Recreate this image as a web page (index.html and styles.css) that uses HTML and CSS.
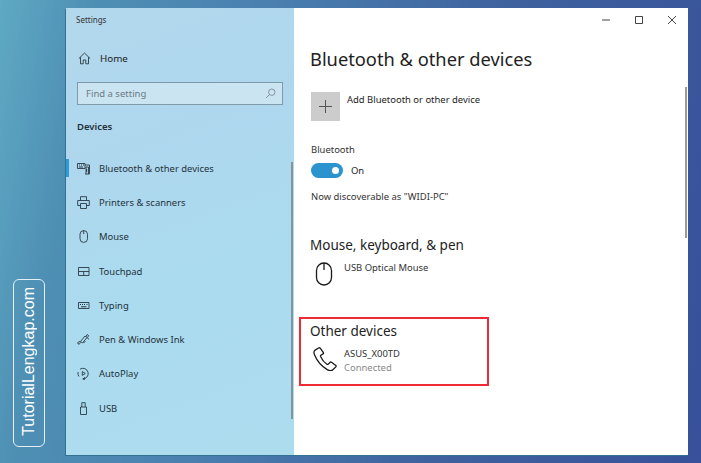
FILE: index.html
```html
<!DOCTYPE html>
<html lang="en">
<head>
<meta charset="utf-8">
<title>Settings</title>
<link rel="stylesheet" href="styles.css">
</head>
<body>
<aside class="watermark"><span>TutorialLengkap.com</span></aside>
<main class="window">
  <nav class="sidebar">
    <div class="app-title">Settings</div>
    <div class="home">
      <svg class="icon" viewBox="0 0 13 13"><path d="M.8 6.6 6.5 1l5.7 5.6M2.5 5.2v6.6h2.7V8h2.6v3.8h2.7V5.2"/></svg>
      <span>Home</span>
    </div>
    <div class="search">
      <span>Find a setting</span>
      <svg class="search-icon" viewBox="0 0 11 11"><circle cx="6.8" cy="4.2" r="3.2"/><path d="M4.5 6.5 1 10"/></svg>
    </div>
    <div class="group">Devices</div>
    <ul class="menu">
      <li class="item active">
        <svg class="icon" viewBox="0 0 13 13"><path d="M.5 1.500h7.500v5H.5zM8 3h4.500v9H8M9 12V5h2.500v7"/><path class="dots" d="M2 3h1M4 3h1M6 3h1M2 5h4M9.700 7v3"/></svg>
        <span>Bluetooth &amp; other devices</span>
      </li>
      <li class="item">
        <svg class="icon" viewBox="0 0 13 13"><path d="M3.500 4.500V.7h6v3.800M3.500 9.500H.7v-5h11.600v5H9.500M3.500 7.500h6v5h-6z"/></svg>
        <span>Printers &amp; scanners</span>
      </li>
      <li class="item">
        <svg class="icon" viewBox="0 0 13 13"><rect x="3" y=".6" width="7.500" height="11.800" rx="3.700"/><path d="M6.700.6v3.500"/></svg>
        <span>Mouse</span>
      </li>
      <li class="item">
        <svg class="icon" viewBox="0 0 13 13"><path d="M1.500 2.500h10.500v8H1.500zM1.500 6.500h10.500M6.700 6.500v4"/></svg>
        <span>Touchpad</span>
      </li>
      <li class="item">
        <svg class="icon" viewBox="0 0 13 13"><path d="M1.500 3.500h10.500v6H1.500z"/><path class="dots" d="M3 5.500h1M5 5.500h1M7 5.500h1M9.500 5.500h1M4 7.800h5.500"/></svg>
        <span>Typing</span>
      </li>
      <li class="item">
        <svg class="icon" viewBox="0 0 13 13"><path d="M1 11c-.8-1.600 1-3 2-2.300.9.800-.2 3-2 2.300zM3.500 8.500 8 3l2 1.500-4.500 5.500zM6 9c1 .5 2 .2 2.500-.5M9 3.500l1.200-2 1.500 1.200-1.500 2M10.500 5.500l1.500.5"/></svg>
        <span>Pen &amp; Windows Ink</span>
      </li>
      <li class="item">
        <svg class="icon" viewBox="0 0 13 13"><path d="M3 2.200A5.300 5.300 0 1 1 5.500 11.900M8 10.200l-2 1.700 2 1M1.100 5a5.300 5.300 0 0 0 .8 4.500"/><path d="M5.300 4.600v3.800l3-1.900z"/></svg>
        <span>AutoPlay</span>
      </li>
      <li class="item">
        <svg class="icon" viewBox="0 0 13 13"><path d="M3.500 5h6v7.500h-6zM4.800 5V.7h3.400V5"/><path class="dots" d="M5.800 2.500h.01M7.200 2.500h.01"/></svg>
        <span>USB</span>
      </li>
    </ul>
    <div class="side-scroll"></div>
  </nav>
  <section class="content">
    <div class="titlebar">
      <svg class="ctrl" viewBox="0 0 10 10"><path d="M1 5h8"/></svg>
      <svg class="ctrl" viewBox="0 0 10 10"><path d="M1.500 1.500h7v7h-7z"/></svg>
      <svg class="ctrl" viewBox="0 0 10 10"><path d="M1 1l8 8M9 1l-8 8"/></svg>
    </div>
    <h1>Bluetooth &amp; other devices</h1>
    <div class="add">
      <div class="add-box">
        <svg viewBox="0 0 13 13"><path d="M6.500 0v13M0 6.500h13"/></svg>
      </div>
      <span>Add Bluetooth or other device</span>
    </div>
    <div class="label">Bluetooth</div>
    <div class="toggle-row">
      <div class="toggle"><div class="knob"></div></div>
      <span>On</span>
    </div>
    <div class="label discover">Now discoverable as "WIDI-PC"</div>
    <h2 class="mouse-head">Mouse, keyboard, &amp; pen</h2>
    <div class="device mouse-device">
      <svg class="dev-icon" viewBox="0 0 24 24"><rect x="4.500" y="1" width="15" height="22" rx="7.500"/><path d="M12 1v7"/></svg>
      <div class="dev-text"><div>USB Optical Mouse</div></div>
    </div>
    <div class="highlight">
      <h2>Other devices</h2>
      <div class="device phone">
        <svg class="dev-icon" viewBox="0 0 24 24"><path d="M5.500 1 1.800 3.400C.6 4.300.9 6.300 1.600 8c2.600 6.200 7 11.300 12.600 14.600 2 1.100 4.300 1.400 5.600.2l3-2.900c.4-.5.400-1 0-1.400l-4.300-3.300c-.5-.3-1-.3-1.400.1l-1.800 1.800c-.4.400-.9.400-1.400.1-2.600-1.700-5-4.700-6.300-7.700-.2-.5-.1-1 .3-1.300l2.100-1.300c.5-.3.600-.8.400-1.300L7.400 1.300C7 .7 6.100.6 5.500 1z"/></svg>
        <div class="dev-text">
          <div>ASUS_X00TD</div>
          <div class="status">Connected</div>
        </div>
      </div>
    </div>
    <div class="main-scroll"></div>
  </section>
</main>
</body>
</html>
```
FILE: styles.css
```css
* { box-sizing: border-box; margin: 0; padding: 0; }
html, body { height: 100%; }
body {
  width: 701px;
  height: 463px;
  overflow: hidden;
  padding: 8px 13px 8px 66px;
  position: relative;
  font-family: "Noto Sans", sans-serif;
  font-size: 9.450px;
  color: #222;
  background: linear-gradient(100deg, #5fa9c3 0%, #4e8fb4 12%, #4a7fb0 35%, #3f649f 62%, #38519a 100%);
}
.watermark {
  position: absolute;
  left: 13px;
  top: 279px;
  width: 32px;
  height: 168px;
  padding-bottom: 3px;
  border: 1px solid #e4f0f5;
  border-radius: 6px;
  display: flex;
  align-items: center;
  justify-content: center;
  color: #fff;
  font-family: "Liberation Sans", sans-serif;
  font-size: 16px;
}
.watermark span { writing-mode: vertical-rl; transform: rotate(180deg); white-space: nowrap; }
.window {
  display: flex;
  width: 622px;
  height: 447px;
  box-shadow: -1px 1px 0 #34708f;
}
.sidebar {
  position: relative;
  width: 228px;
  flex: none;
  padding-left: 10px;
  background: linear-gradient(160deg, #b2d8ec 0%, #aed7ee 30%, #abdbef 60%, #aedcef 100%);
}
.app-title { padding-top: 6px; height: 36px; font-size: 8px; line-height: 12px; color: #333; }
.home { display: flex; align-items: center; height: 28px; font-size: 9.800px; padding-left: 2px; }
.home .icon { margin-right: 9px; }
.icon { width: 13px; height: 13px; flex: none; fill: none; stroke: #2a3a44; stroke-width: .9; }
.icon .dots { stroke-width: 1; }
.search {
  display: flex;
  align-items: center;
  justify-content: space-between;
  width: 206px;
  height: 23px;
  margin: 10px 0 0 1px;
  padding: 0 6px 0 8px;
  border: 1.500px solid #7f9aa8;
  background: #cae4f2;
  color: #6c7a84;
  font-size: 9.500px;
}
.search-icon { width: 11px; height: 11px; fill: none; stroke: #7d8c96; stroke-width: .9; }
.group { margin: 15px 0 0 1px; font-weight: 600; font-size: 9.500px; line-height: 14px; color: #22313a; }
.menu { list-style: none; margin: 17px 0 0 -10px; }
.item {
  display: flex;
  align-items: center;
  gap: 9px;
  height: 34.300px;
  padding-left: 11px;
  color: #24323b;
  position: relative;
}
.active::before {
  content: "";
  position: absolute;
  left: 0;
  top: 8px;
  width: 3px;
  height: 18px;
  background: #2f9bd6;
}
.side-scroll {
  position: absolute;
  right: 1px;
  top: 154px;
  width: 2px;
  height: 257px;
  background: #84949d;
}
.content { position: relative; flex: 1; background: #fff; padding-left: 16px; }
.titlebar {
  display: flex;
  justify-content: flex-end;
  gap: 23px;
  height: 24px;
  padding: 7px 11px 0 0;
}
.ctrl { width: 10px; height: 10px; fill: none; stroke: #444; stroke-width: 1; }
h1 { margin-top: 14px; font-size: 18.300px; font-weight: 400; line-height: 26px; color: #222; }
.add { display: flex; gap: 7px; margin-top: 20px; height: 29px; padding-left: 1px; }
.add span { line-height: 16px; color: #222; }
.add-box { width: 29px; height: 29px; background: #ccc; display: flex; align-items: center; justify-content: center; }
.add-box svg { width: 13px; height: 13px; fill: none; stroke: #555; stroke-width: 1; }
.label { margin-top: 21px; line-height: 16px; padding-left: 1px; color: #333; }
.toggle-row { display: flex; align-items: center; gap: 8px; margin-top: 5px; padding-left: 1px; height: 15px; }
.toggle { width: 32px; height: 15px; border-radius: 8px; background: #2b94cf; position: relative; }
.knob { position: absolute; right: 4px; top: 4px; width: 7px; height: 7px; border-radius: 50%; background: #fff; }
.discover { margin-top: 11px; }
h2 { font-size: 13.500px; font-weight: 400; line-height: 20px; color: #222; }
.mouse-head { margin-top: 30px; }
.device { display: flex; gap: 7px; padding-left: 3px; }
.mouse-device { margin-top: 7px; padding-left: 2px; gap: 8px; }
.mouse-device .dev-text { margin-top: -1px; }
.dev-icon { width: 24px; height: 24px; flex: none; fill: none; stroke: #1a1a1a; stroke-width: 1.300; }
.dev-text { line-height: 14px; color: #333; }
.status { color: #8a8a8a; }
.highlight {
  width: 190px;
  height: 69px;
  margin: 31px 0 0 -11px;
  padding: 2px 0 0 9px;
  border: 2px solid #ee2a35;
}
.phone { margin-top: 6px; }
.main-scroll {
  position: absolute;
  right: 1px;
  top: 79px;
  width: 2px;
  height: 151px;
  background: #9a9a9a;
}
```
